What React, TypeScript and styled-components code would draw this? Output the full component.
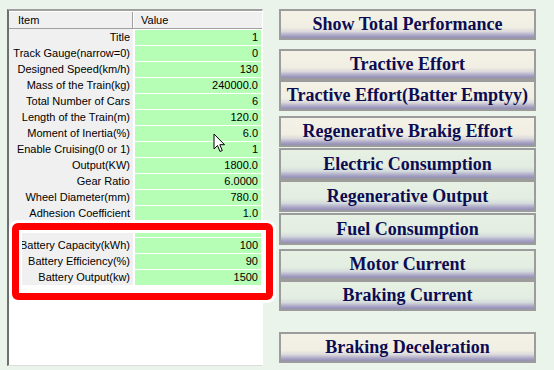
import React from "react";
import styled, { createGlobalStyle } from "styled-components";

const Global = createGlobalStyle`
  html, body { margin: 0; padding: 0; background: #ebf4ea; }
  body { width: 554px; height: 370px; overflow: hidden; }
  #root { position: relative; width: 554px; height: 370px; }
`;

const Page = styled.div`
  display: flex;
  align-items: flex-start;
  width: 554px;
  height: 370px;
  background: #ebf4ea;
`;

const Panel = styled.div`
  box-sizing: border-box;
  margin: 9px 0 0 7px;
  width: 256px;
  height: 357px;
  background: #ffffff;
  border-top: 2px solid #a0a0a0;
  border-left: 2px solid #6e6e6e;
  border-right: 1px solid #ffffff;
  border-bottom: 1px solid #dcdcdc;
  font-family: "Liberation Sans", Arial, sans-serif;
  font-size: 11px;
  color: #000;
`;

const Header = styled.div`
  display: flex;
  height: 18px;
  box-sizing: border-box;
  background: #f0f0f0;
  border-top: 1px solid #ffffff;
  border-bottom: 1px solid #a0a0a0;
`;

const HeadCell = styled.div<{ $w?: number; $pad: number; $divider?: boolean }>`
  box-sizing: border-box;
  ${(p) => (p.$w ? `width: ${p.$w}px;` : "flex: 1;")}
  padding-left: ${(p) => p.$pad}px;
  line-height: 17px;
  ${(p) =>
    p.$divider
      ? "border-right: 1px solid #a0a0a0;"
      : "border-left: 1px solid #ffffff;"}
`;

const Rows = styled.div`
  display: grid;
  grid-template-columns: 124px 126px;
  column-gap: 2px;
`;

const Label = styled.div`
  height: 16px;
  line-height: 16px;
  background: #f0f0f0;
  text-align: right;
  padding-right: 3px;
  white-space: nowrap;
  overflow: hidden;
`;

const Value = styled.div`
  box-sizing: border-box;
  height: 16px;
  line-height: 15px;
  background: #b6fdb6;
  border-top: 1px solid #ffffff;
  text-align: right;
  padding-right: 3px;
`;

const Buttons = styled.div`
  display: flex;
  flex-direction: column;
  margin-left: 16px;
  padding-top: 9px;
  width: 257px;
`;

const Btn = styled.button<{ $mt: number; $h: number; $green?: boolean }>`
  box-sizing: border-box;
  margin: ${(p) => p.$mt}px 0 0 0;
  height: ${(p) => p.$h}px;
  width: 257px;
  padding: 0 0 1px 0;
  border: 2px solid #9c9c9c;
  border-radius: 0;
  font-family: "Liberation Serif", "Times New Roman", serif;
  font-weight: bold;
  font-size: 18px;
  line-height: 20px;
  color: #0c0c52;
  white-space: nowrap;
  overflow: hidden;
  background: linear-gradient(
    to bottom,
    ${(p) => (p.$green ? "#e6f0e3" : "#f4f2e6")} 0%,
    ${(p) => (p.$green ? "#e3ede1" : "#f1efe3")} 60%,
    ${(p) => (p.$green ? "#d4dadc" : "#dcd9dc")} 76%,
    #aaa6c6 90%,
    #928eb6 100%
  );
`;

const RedBox = styled.div`
  position: absolute;
  box-sizing: border-box;
  left: 12px;
  top: 223px;
  width: 261px;
  height: 77px;
  border: 7px solid #ff0000;
  border-radius: 6px;
  box-shadow: 0 0 0 3px #ffffff, inset 0 0 0 3px #ffffff;
  pointer-events: none;
`;

const Cursor = styled.svg`
  position: absolute;
  left: 213px;
  top: 133px;
`;

const rows: [string, string][] = [
  ["Title", "1"],
  ["Track Gauge(narrow=0)", "0"],
  ["Designed Speed(km/h)", "130"],
  ["Mass of the Train(kg)", "240000.0"],
  ["Total Number of Cars", "6"],
  ["Length of the Train(m)", "120.0"],
  ["Moment of Inertia(%)", "6.0"],
  ["Enable Cruising(0 or 1)", "1"],
  ["Output(KW)", "1800.0"],
  ["Gear Ratio", "6.0000"],
  ["Wheel Diameter(mm)", "780.0"],
  ["Adhesion Coefficient", "1.0"],
  ["", ""],
  ["Battery Capacity(kWh)", "100"],
  ["Battery Efficiency(%)", "90"],
  ["Battery Output(kw)", "1500"],
];

const buttons: { t: string; mt: number; h: number; g?: boolean }[] = [
  { t: "Show Total Performance", mt: 0, h: 31 },
  { t: "Tractive Effort", mt: 9, h: 31 },
  { t: "Tractive Effort(Batter Emptyy)", mt: 0, h: 31 },
  { t: "Regenerative Brakig Effort", mt: 5, h: 31 },
  { t: "Electric Consumption", mt: 1, h: 32, g: true },
  { t: "Regenerative Output", mt: 0, h: 32, g: true },
  { t: "Fuel Consumption", mt: 1, h: 32, g: true },
  { t: "Motor Current", mt: 4, h: 31, g: true },
  { t: "Braking Current", mt: 0, h: 31, g: true },
  { t: "Braking Deceleration", mt: 21, h: 31 },
];

export default function App() {
  return (
    <>
      <Global />
      <Page>
        <Panel>
          <Header>
            <HeadCell $w={124} $pad={9} $divider>
              Item
            </HeadCell>
            <HeadCell $pad={7}>Value</HeadCell>
          </Header>
          <Rows>
            {rows.map(([l, v], i) => (
              <React.Fragment key={i}>
                <Label>{l}</Label>
                <Value>{v}</Value>
              </React.Fragment>
            ))}
          </Rows>
        </Panel>
        <Buttons>
          {buttons.map((b) => (
            <Btn key={b.t} $mt={b.mt} $h={b.h} $green={b.g}>
              {b.t}
            </Btn>
          ))}
        </Buttons>
      </Page>
      <RedBox />
      <Cursor width="14" height="21" viewBox="0 0 14 21">
        <path
          d="M1 1 L1 16 L4.5 12.5 L7 18.5 L9.3 17.5 L6.8 11.7 L11.5 11.7 Z"
          fill="#ffffff"
          stroke="#000000"
          strokeWidth="1"
          strokeLinejoin="miter"
        />
      </Cursor>
    </>
  );
}
